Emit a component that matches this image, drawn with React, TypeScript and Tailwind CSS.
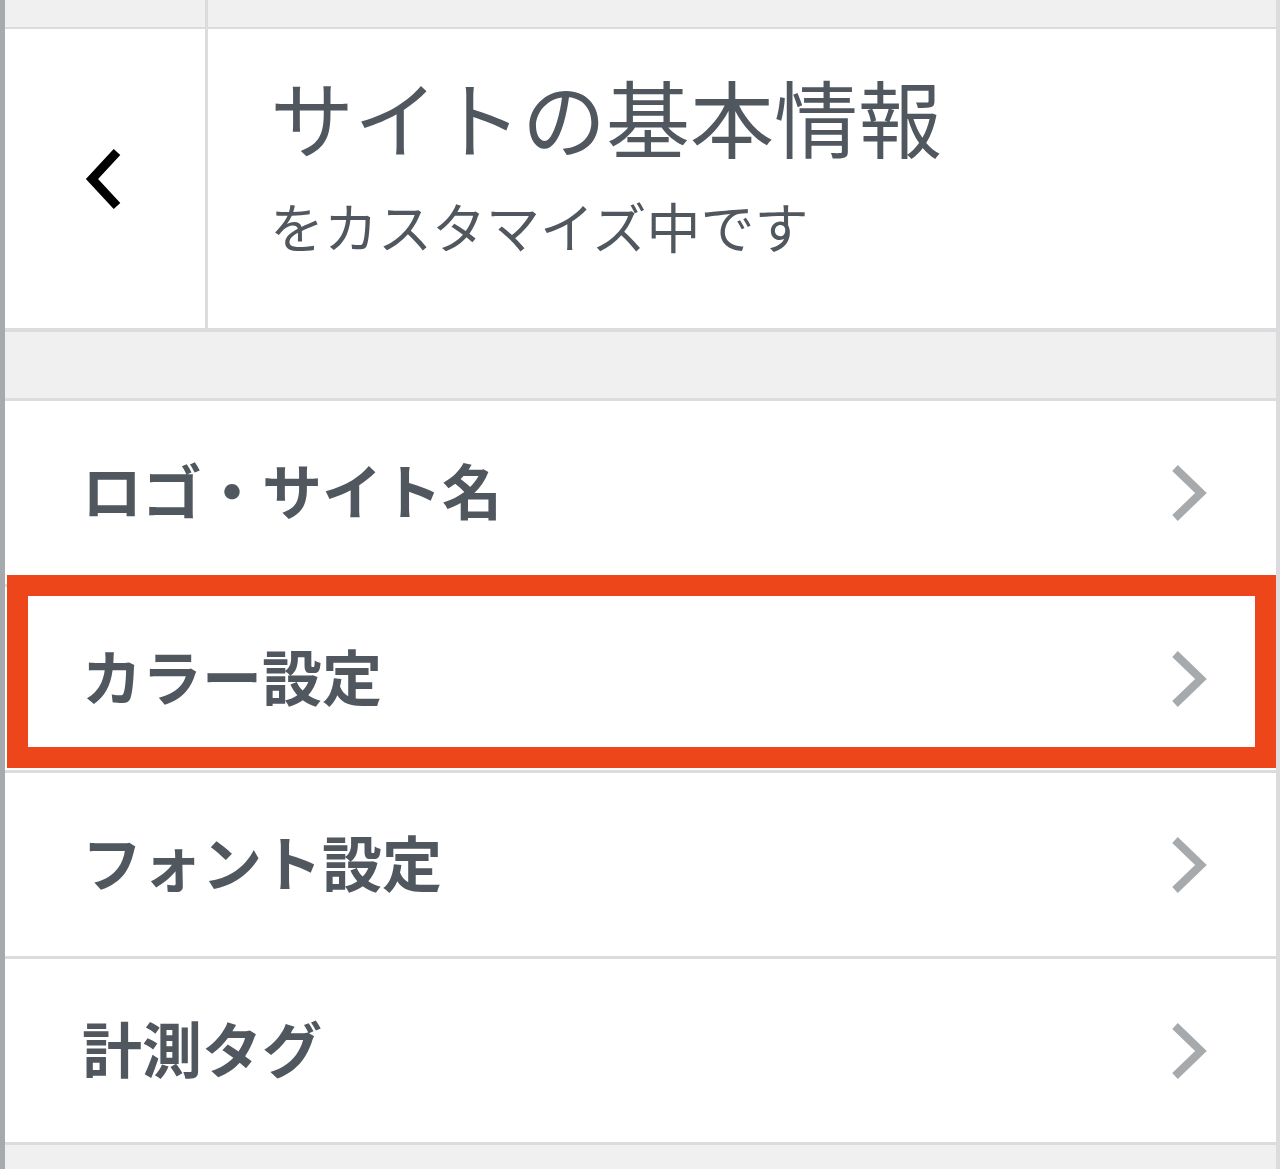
const items = ["ロゴ・サイト名", "カラー設定", "フォント設定", "計測タグ"];

const ChevronRight = () => (
  <svg width="38" height="62" viewBox="0 0 38 62" fill="none">
    <polyline
      points="6,6 32,31 6,56"
      stroke="#a7aaad"
      strokeWidth="8"
      strokeLinejoin="miter"
    />
  </svg>
);

const ChevronLeft = () => (
  <svg width="38" height="64" viewBox="0 0 38 64" fill="none">
    <polyline
      points="32,5 7,32 32,59"
      stroke="#000000"
      strokeWidth="9"
      strokeLinejoin="miter"
    />
  </svg>
);

export default function App() {
  return (
    <div
      className="flex h-[1169px] w-[1280px] flex-col border-l-[5px] border-r-4 border-l-[#a7aaad] border-r-[#dcdcde] bg-[#f0f0f1] text-[#50575e]"
      style={{ fontFamily: '"Noto Sans CJK JP", "Noto Sans", sans-serif' }}
    >
      {/* header */}
      <div className="flex border-b-4 border-[#dcdcde]">
        <div className="flex w-[203px] flex-col border-r-[3px] border-[#dcdcde]">
          <div className="h-[29px] border-b-2 border-[#dcdcde] bg-[#f0f0f1]" />
          <div className="flex h-[299px] items-center justify-center bg-white pr-[2px]">
            <ChevronLeft />
          </div>
        </div>
        <div className="flex flex-1 flex-col">
          <div className="h-[29px] border-b-2 border-[#dcdcde] bg-[#f0f0f1]" />
          <div className="flex h-[299px] flex-col justify-center bg-white pb-[33px] pl-[62px]">
            <div className="text-[84px] leading-[100px] font-normal">
              サイトの基本情報
            </div>
            <div className="mt-[28px] text-[54px] leading-[64px] font-normal">
              をカスタマイズ中です
            </div>
          </div>
        </div>
      </div>

      {/* spacer */}
      <div className="h-[69px] border-b-[3px] border-[#dcdcde]" />

      {/* menu */}
      <div className="flex flex-col">
        {items.map((label, i) => (
          <div
            key={label}
            className="relative flex h-[186px] items-center justify-between border-b-[3px] border-[#dcdcde] bg-white pr-[69px] pl-[77px]"
          >
            <span className="mb-[8px] text-[60px] leading-none font-bold">
              {label}
            </span>
            <ChevronRight />
            {i === 1 && (
              <div className="absolute -top-[12px] right-0 bottom-[2px] left-[2px] border-[21px] border-[#ee461b]" />
            )}
          </div>
        ))}
      </div>
    </div>
  );
}
